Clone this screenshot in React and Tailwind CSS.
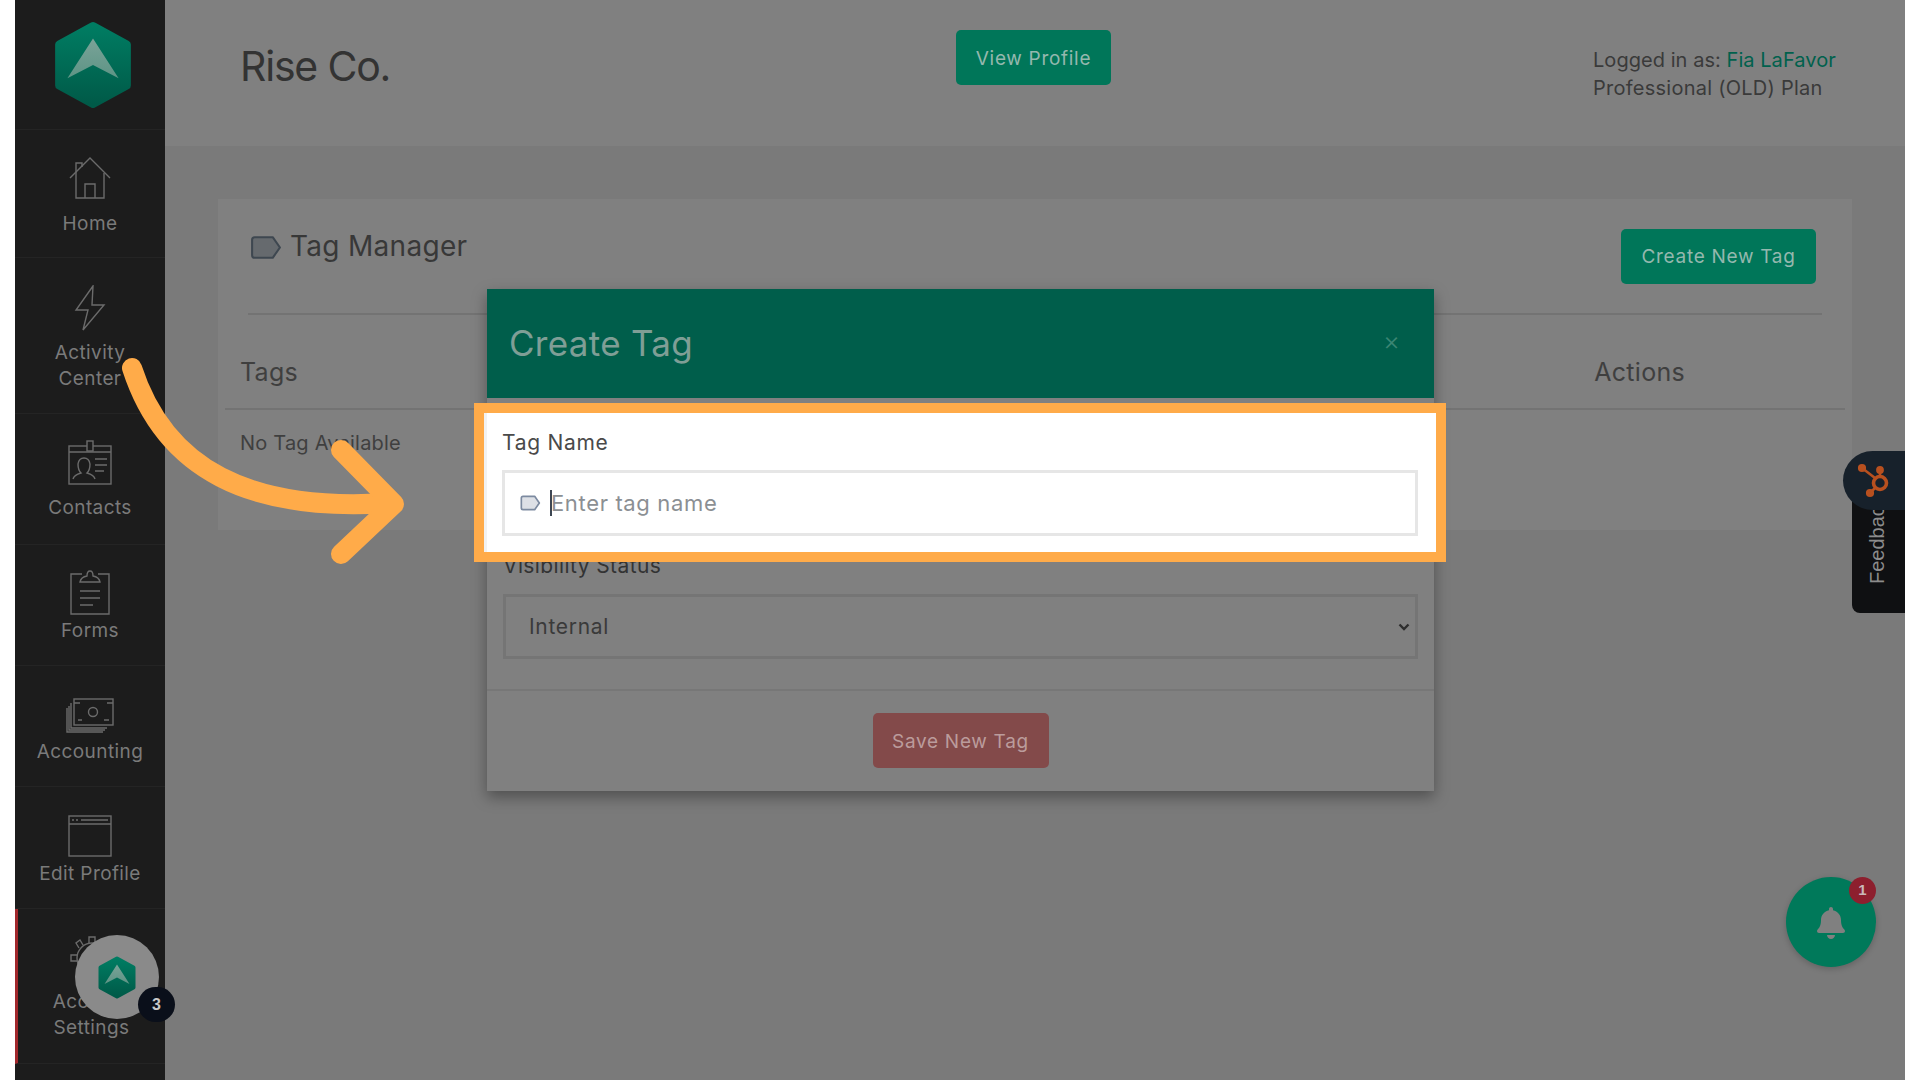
import React from 'react';
import { FaBell } from 'react-icons/fa';

const TagIcon = ({ className, fill, stroke, sw = 2 }) => (
    <svg viewBox="0 0 32 24" className={className} fill={fill} stroke={stroke} strokeWidth={sw} strokeLinejoin="round">
        <path d="M3 4.5 Q3 2 5.5 2 H23 L30 12 L23 22 H5.5 Q3 22 3 19.5 Z" />
    </svg>
);

const Logo = ({ className }) => (
    <svg viewBox="0 0 76 86" className={className}>
        <defs>
            <linearGradient id="hexfill" x1="0" y1="0" x2="0" y2="1">
                <stop offset="0" stopColor="#007c62" />
                <stop offset="1" stopColor="#005a48" />
            </linearGradient>
            <linearGradient id="arrowfill" x1="0" y1="0" x2="0" y2="1">
                <stop offset="0" stopColor="#7aa398" />
                <stop offset="1" stopColor="#5d9485" />
            </linearGradient>
        </defs>
        <path d="M38 5 L71 23 V63 L38 81 L5 63 V23 Z" fill="url(#hexfill)" stroke="url(#hexfill)" strokeWidth="8" strokeLinejoin="round" />
        <path d="M38 17 L63 56 L38 43 L13 56 Z" fill="url(#arrowfill)" />
    </svg>
);

const iconClass = 'w-[44px] h-[46px] text-[#6b6b6b]';

const HomeIcon = () => (
    <svg viewBox="0 0 44 46" className={iconClass} fill="none" stroke="currentColor" strokeWidth="1.4">
        <path d="M2 23 L22 3 L42 23" />
        <path d="M8 18 V8 H14 V12" />
        <path d="M8 18 V43 H36 V18" />
        <path d="M17 43 V29 H27 V43" />
    </svg>
);

const BoltIcon = () => (
    <svg viewBox="0 0 44 46" className={iconClass} fill="none" stroke="currentColor" strokeWidth="1.4">
        <path d="M25 1 L8 25 H20 L15 45 L36 20 H24 Z" />
    </svg>
);

const ContactIcon = () => (
    <svg viewBox="0 0 44 46" className={iconClass} fill="none" stroke="currentColor" strokeWidth="1.4">
        <rect x="1" y="6" width="42" height="38" />
        <path d="M1 12 H43" />
        <rect x="19" y="1" width="6" height="10" fill="#1c1c1c" />
        <path d="M5 39 Q6 35 13 33 Q10 30 10 24 Q11 18 16 18 Q21 18 22 24 Q22 30 19 33 Q26 35 27 39" />
        <path d="M27 19 H39 M27 25 H39 M27 31 H36" />
    </svg>
);

const FormIcon = () => (
    <svg viewBox="0 0 44 46" className={iconClass} fill="none" stroke="currentColor" strokeWidth="1.4">
        <path d="M14 5 H3 V45 H41 V5 H30" />
        <path d="M12 13 H32 Q31 8 25 7 Q25 2 22 2 Q19 2 19 7 Q13 8 12 13 Z" />
        <path d="M12 22 H32 M12 29 H32 M12 36 H25" />
    </svg>
);

const MoneyIcon = () => (
    <svg viewBox="0 0 48 36" className="w-[48px] h-[36px] text-[#6b6b6b] mt-[5px] mb-[5px]" fill="none" stroke="currentColor" strokeWidth="1.4">
        <rect x="8" y="1" width="39" height="26" />
        <circle cx="27" cy="14" r="4.5" />
        <path d="M8 5 H14 M41 5 H47 M12 22 H16 M38 22 H43" />
        <path d="M5 5 V30 H41 M3 8 V32 H39 M1 10 V34 H37" />
    </svg>
);

const WindowIcon = () => (
    <svg viewBox="0 0 44 42" className="w-[44px] h-[42px] text-[#6b6b6b] mb-[4px]" fill="none" stroke="currentColor" strokeWidth="1.4">
        <rect x="1" y="1" width="42" height="40" />
        <path d="M1 9 H43" />
        <path d="M4 5 H6 M8 5 H10 M13 5 H40" />
    </svg>
);

const GearIcon = () => (
    <svg viewBox="0 0 44 46" className={iconClass} fill="none" stroke="currentColor" strokeWidth="1.4">
        <circle cx="22" cy="23" r="15" />
        <circle cx="22" cy="23" r="6" />
        <path d="M19 8 V2 H25 V8 M19 38 V44 H25 V38 M7 20 H1 V26 H7 M37 20 H43 V26 H37 M9 13 L6 8 L10 5 L13 10 M31 10 L34 5 L38 8 L35 13" />
    </svg>
);

const navItems = [
    { label: ['Home'], icon: <HomeIcon />, row: 'h-[128px] pt-[5px] gap-[10px]' },
    { label: ['Activity', 'Center'], icon: <BoltIcon />, row: 'h-[156px] pt-[6px] gap-[9px]' },
    { label: ['Contacts'], icon: <ContactIcon />, row: 'h-[131px] pt-[2px] gap-[9px]' },
    { label: ['Forms'], icon: <FormIcon />, row: 'h-[121px] pt-[2px] gap-[3px]' },
    { label: ['Accounting'], icon: <MoneyIcon />, row: 'h-[121px] pt-[5px] gap-0' },
    { label: ['Edit Profile'], icon: <WindowIcon />, row: 'h-[122px] pt-[7px] gap-0' },
    { label: ['Account', 'Settings'], icon: <GearIcon />, row: 'h-[155px] pt-[4px] gap-[8px] border-l-[3px] border-l-[#a1282c]' },
];

const Sidebar = () => (
    <aside className="w-[150px] shrink-0 bg-[#1c1c1c] flex flex-col">
        <div className="h-[130px] shrink-0 border-b border-[#242424] flex justify-center pt-[21px]">
            <Logo className="w-[78px] h-[88px] ml-[5px]" />
        </div>
        {navItems.map((item) => (
            <div key={item.label[0]} className={`${item.row} shrink-0 border-b border-[#242424] flex flex-col items-center justify-center`}>
                {item.icon}
                <div className="text-[19px] leading-[26px] tracking-[0.4px] text-[#7a7a7a] text-center">
                    {item.label.map((line) => (
                        <div key={line}>{line}</div>
                    ))}
                </div>
            </div>
        ))}
    </aside>
);

const Header = () => (
    <header className="h-[146px] shrink-0 bg-[#808080] flex items-start pl-[75px] relative">
        <div className="w-[716px] pt-[41px] text-[41px] leading-[50px] tracking-[-1.2px] text-[#333333]">Rise Co.</div>
        <div className="mt-[30px] w-[155px] h-[55px] pt-[3px] rounded-[5px] bg-[#007659] text-[#94b8ae] text-[19px] tracking-[0.7px] flex items-center justify-center">View Profile</div>
        <div className="ml-[482px] mt-[46px] text-[20px] leading-[28px] tracking-[0.05px] text-[#3a3a3a]">
            <div>Logged in as: <span className="text-[#00614d]">Fia LaFavor</span></div>
            <div className="tracking-[0.25px]">Professional (OLD) Plan</div>
        </div>
    </header>
);

const TagCard = () => (
    <div className="mx-[53px] mt-[53px] h-[331px] bg-[#808080] flex flex-col">
        <div className="h-[116px] mx-[30px] border-b-2 border-[#737373] flex justify-between shrink-0">
            <div className="flex items-center gap-[8px] h-[94px] pl-[1px]">
                <TagIcon className="w-[33px] h-[25px] mt-[2px]" fill="#666a6e" stroke="#3e4750" />
                <span className="text-[28px] tracking-[0.3px] text-[#383838]">Tag Manager</span>
            </div>
            <div className="mt-[30px] mr-[6px] w-[195px] h-[55px] pt-[2px] rounded-[5px] bg-[#007659] text-[#94b8ae] text-[19px] tracking-[0.7px] flex items-center justify-center">Create New Tag</div>
        </div>
        <div className="h-[95px] pt-[22px] mx-[7px] px-[15px] border-b-2 border-[#737373] flex items-center justify-between text-[25px] tracking-[0.3px] text-[#3f3f3f] shrink-0">
            <span>Tags</span>
            <span className="mr-[145px]">Actions</span>
        </div>
        <div className="pl-[22px] pt-[20px] text-[20px] leading-[26px] tracking-[0.2px] text-[#3f3f3f]">No Tag Available</div>
    </div>
);

const Modal = () => (
    <div className="absolute left-[487px] top-[289px] w-[947px] h-[502px] bg-[#808080] shadow-[0_6px_14px_rgba(0,0,0,0.35)] flex flex-col">
        <div className="h-[109px] shrink-0 bg-[#005e4b] flex items-center justify-between pl-[22px] pr-[34px]">
            <span className="text-[35px] tracking-[0.3px] text-[#7f9e96]">Create Tag</span>
            <span className="text-[26px] text-[#3b8573] font-light -mt-[7px]">×</span>
        </div>
        <div className="px-[16px] pt-[154px] pb-[30px] border-b-2 border-[#777777] shrink-0">
            <div className="text-[21px] leading-[28px] tracking-[0.4px] text-[#333333]">Visibility Status</div>
            <div className="mt-[14px] h-[65px] border-[3px] border-[#757575] flex items-center justify-between pl-[23px] pr-[5px] text-[21px] tracking-[0.7px] text-[#3a3a3a]">
                <span>Internal</span>
                <svg viewBox="0 0 12 8" className="w-[12px] h-[8px]" fill="none" stroke="#2d2d2d" strokeWidth="2.4">
                    <path d="M1.5 1.5 L6 6 L10.5 1.5" />
                </svg>
            </div>
        </div>
        <div className="flex justify-center pt-[22px]">
            <div className="w-[176px] h-[55px] pt-[3px] rounded-[5px] bg-[#834a4a] text-[#bb9c9c] text-[19px] tracking-[0.7px] flex items-center justify-center">Save New Tag</div>
        </div>
    </div>
);

const Highlight = () => (
    <div className="absolute left-[474px] top-[403px] w-[972px] h-[159px] bg-white border-[10px] border-[#ffab49] shadow-[inset_3px_0_0_#f2f2f2] px-[18px]">
        <div className="pt-[16px] text-[21px] leading-[28px] tracking-[0.7px] text-[#4a4a4a]">Tag Name</div>
        <div className="mt-[13px] h-[66px] border-[3px] border-[#e6e6e6] flex items-center pl-[14px]">
            <TagIcon className="w-[22px] h-[16px] shrink-0" fill="#dde0e6" stroke="#7c8aa0" sw={2.5} />
            <span className="ml-[9px] h-[26px] w-[2px] bg-[#3d4653] shrink-0"></span>
            <span className="-ml-[1px] text-[22px] tracking-[0.65px] text-[#8b8f93]">Enter tag name</span>
        </div>
    </div>
);

const Arrow = () => (
    <svg className="absolute left-0 top-0 w-[420px] h-[600px] pointer-events-none" viewBox="0 0 420 600" fill="none" stroke="#ffab49" strokeWidth="20" strokeLinecap="round" strokeLinejoin="round">
        <path d="M132 368 C 165 470 250 512 388 503" />
        <path d="M341 450 L394 504 L341 554" />
    </svg>
);

const Feedback = () => (
    <>
        <div className="absolute left-[1852px] top-[500px] w-[53px] h-[113px] bg-[#0f1012] rounded-bl-[8px] overflow-hidden">
            <span className="absolute left-[13px] top-[84px] origin-top-left -rotate-90 whitespace-nowrap text-[20px] leading-[24px] text-[#8c8c8c] [font-family:'Liberation_Sans',sans-serif]">Feedback</span>
        </div>
        <div className="absolute left-[1843px] top-[451px] w-[62px] h-[59px] bg-[#17212b] rounded-l-[30px]">
            <svg viewBox="0 0 62 59" className="w-full h-full" fill="none" stroke="#b8501f" strokeWidth="2.6">
                <circle cx="37" cy="32" r="6.5" strokeWidth="3.6" />
                <path d="M19 17 L32 27 M37 19 V25 M27 42 L32 37" />
                <circle cx="19" cy="17" r="2.8" fill="#b8501f" />
                <circle cx="37" cy="19" r="2.6" fill="#b8501f" />
                <circle cx="27" cy="42" r="2.8" fill="#b8501f" />
            </svg>
        </div>
    </>
);

const Bell = () => (
    <div className="absolute left-[1786px] top-[877px] w-[90px] h-[90px] rounded-full bg-[#00795a] shadow-[0_2px_6px_rgba(0,0,0,0.2)] flex items-center justify-center">
        <FaBell className="w-[30px] h-[32px] text-[#808080] mt-[1px]" />
        <div className="absolute right-0 top-0 w-[27px] h-[27px] rounded-full bg-[#8d1f2e] text-[#c9b9b9] text-[15px] font-bold flex items-center justify-center [font-family:'Liberation_Sans',sans-serif]">1</div>
    </div>
);

const ChatBubble = () => (
    <div className="absolute left-[75px] top-[935px] w-[84px] h-[84px] rounded-full bg-[#8a8a8a] flex items-center justify-center">
        <Logo className="w-[38px] h-[43px]" />
        <div className="absolute left-[63px] top-[52px] w-[37px] h-[35px] rounded-full bg-[#0a0f1a] text-[#c8c8c8] text-[16px] font-bold flex items-center justify-center [font-family:'Liberation_Sans',sans-serif]">3</div>
    </div>
);

export default function App() {
    return (
        <div className="relative w-[1920px] h-[1080px] overflow-hidden bg-white [font-family:Inter,sans-serif]">
            <div className="ml-[15px] w-[1890px] h-full flex bg-[#7a7a7a]">
                <Sidebar />
                <main className="flex-1 flex flex-col">
                    <Header />
                    <TagCard />
                </main>
            </div>
            <Modal />
            <Highlight />
            <Arrow />
            <Feedback />
            <Bell />
            <ChatBubble />
        </div>
    );
}
